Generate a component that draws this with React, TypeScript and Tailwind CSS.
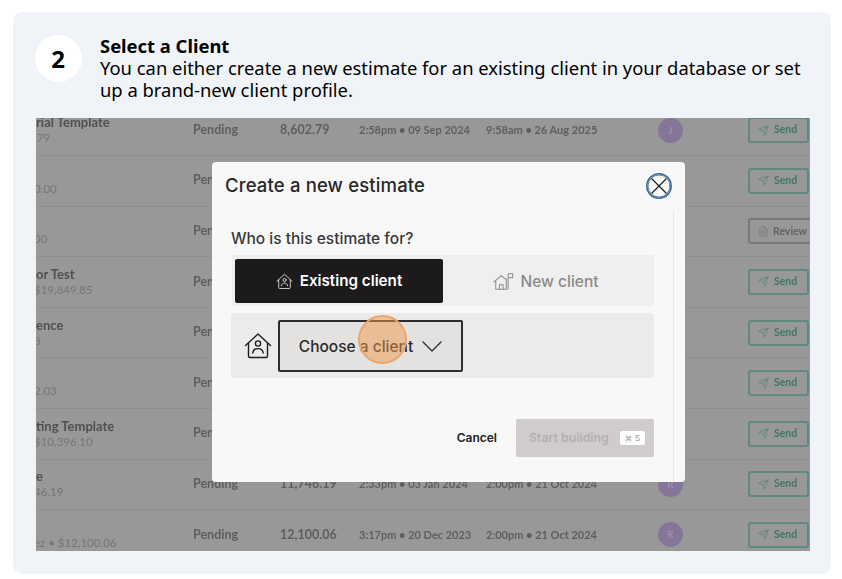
import React from 'react';
import { Send, FileText, Command } from 'lucide-react';

type Row = {
  name: string;
  sub: string;
  amount: string;
  created: string;
  updated: string;
  initial: string;
  review?: boolean;
};

const rows: Row[] = [
  { name: 'rial Template', sub: ',79', amount: '8,602.79', created: '2:58pm • 09 Sep 2024', updated: '9:58am • 26 Aug 2025', initial: 'J' },
  { name: '', sub: '0.00', amount: '0.00', created: '1:12pm • 02 Sep 2024', updated: '1:12pm • 02 Sep 2024', initial: 'J' },
  { name: '', sub: '00', amount: '0.00', created: '4:40pm • 21 Aug 2024', updated: '4:40pm • 21 Aug 2024', initial: 'R', review: true },
  { name: 'or Test', sub: '$19,849.85', amount: '19,849.85', created: '3:05pm • 14 Jun 2024', updated: '2:00pm • 21 Oct 2024', initial: 'R' },
  { name: 'ence', sub: '8', amount: '6,310.08', created: '11:20am • 29 May 2024', updated: '2:00pm • 21 Oct 2024', initial: 'R' },
  { name: '', sub: '2.03', amount: '9,402.03', created: '10:02am • 08 Apr 2024', updated: '2:00pm • 21 Oct 2024', initial: 'R' },
  { name: 'ting Template', sub: '$10,396.10', amount: '10,396.10', created: '9:44am • 19 Feb 2024', updated: '2:00pm • 21 Oct 2024', initial: 'R' },
  { name: 'e', sub: '46.19', amount: '11,746.19', created: '2:33pm • 03 Jan 2024', updated: '2:00pm • 21 Oct 2024', initial: 'R' },
  { name: '', sub: 'ez • $12,100.06', amount: '12,100.06', created: '3:17pm • 20 Dec 2023', updated: '2:00pm • 21 Oct 2024', initial: 'R' },
];

const HousePerson = ({ className }: { className?: string }) => (
  <svg className={className} viewBox="0 0 28 28" fill="none" stroke="currentColor" strokeWidth="1.4" strokeLinecap="round" strokeLinejoin="round">
    <path d="M1.500 13.500 14 2l12.500 11.500" />
    <path d="M4.500 11v13a1.500 1.500 0 0 0 1.500 1.500h16a1.500 1.500 0 0 0 1.500-1.500V11" />
    <circle cx="14" cy="11.500" r="2.600" />
    <path d="M8.800 21c.4-3 2.600-4.400 5.200-4.400s4.800 1.400 5.200 4.400" />
  </svg>
);

const HouseFlag = ({ className }: { className?: string }) => (
  <svg className={className} viewBox="0 0 24 20" fill="none" stroke="currentColor" strokeWidth="1.1" strokeLinecap="round" strokeLinejoin="round">
    <path d="M1 10.500 9 3.500l4.500 4" />
    <path d="M3 9v9.500h11.500V7" />
    <path d="M7 18.500v-5h4v5" />
    <path d="M16.500 18.500V1.500h5v4.500h-5" />
  </svg>
);

const CloseIcon = ({ className }: { className?: string }) => (
  <svg className={className} viewBox="0 0 26 26" fill="none" strokeLinecap="round">
    <circle cx="13" cy="13" r="12.200" stroke="#2b6ca6" strokeWidth="1.500" />
    <circle cx="13" cy="13" r="11" stroke="#2a2a2a" strokeWidth="0.600" />
    <path d="M6 6l14 14M20 6L6 20" stroke="#1a1a1a" strokeWidth="1.200" />
  </svg>
);

const TableRow = ({ row }: { row: Row }) => (
  <div className="flex h-[50.6px] w-max shrink-0 items-center border-b border-[#8f8f8f] text-[12.5px] font-bold text-[#5e5e5e]">
    <div className="flex w-[157px] shrink-0 flex-col justify-center leading-[15px]">
      <span className="h-[15px] text-[13px] text-[#505050]">{row.name}</span>
      <span className="-ml-[2px] h-[15px] text-[11.5px] font-medium text-[#787878]">{row.sub}</span>
    </div>
    <span className="w-[87px] shrink-0">Pending</span>
    <span className="w-[79px] shrink-0">{row.amount}</span>
    <span className="w-[127px] shrink-0 text-[11px]">{row.created}</span>
    <span className="w-[172px] shrink-0 text-[11px]">{row.updated}</span>
    <span className="flex h-[25px] w-[25px] shrink-0 items-center justify-center rounded-full bg-[#857599] text-[10px] text-[#9f8fae]">
      {row.initial}
    </span>
    {row.review ? (
      <span className="ml-[65px] flex h-[26px] w-[70px] shrink-0 items-center gap-[4px] rounded-[3px] border-2 border-[#797979] pl-[8px] text-[10.5px] font-bold text-[#636363]">
        <FileText className="h-[11px] w-[11px] shrink-0 text-[#7c7c7c]" />
        Review
      </span>
    ) : (
      <span className="ml-[65px] flex h-[26px] w-[61px] shrink-0 items-center gap-[5px] rounded-[3px] border-2 border-[#5f8a80] pl-[8px] text-[10.5px] font-bold text-[#3f7566]">
        <Send className="h-[11px] w-[11px] shrink-0 text-[#62877c]" />
        Send
      </span>
    )}
  </div>
);

const Modal = () => (
  <div className="absolute left-[176px] top-[44px] flex h-[320px] w-[473px] flex-col rounded-[4px] bg-[#f8f8f8] font-['Inter',sans-serif] text-[#1e1c1d]">
    <div className="flex h-[48px] items-center justify-between px-[13px]">
      <h2 className="text-[18.5px] font-medium tracking-[0.15px] text-[#2a2829]">Create a new estimate</h2>
      <CloseIcon className="h-[26px] w-[26px]" />
    </div>
    <div className="flex flex-1">
      <div className="flex w-[461px] flex-col px-[19px]">
        <p className="mt-[19px] text-[15.5px] font-medium leading-[19px] text-[#3a3839]">Who is this estimate for?</p>
        <div className="ml-[1px] mt-[7px] flex h-[51px] items-center bg-[#efefef] pl-[3px]">
          <div className="flex h-[44px] w-[208px] items-center justify-center gap-[7px] rounded-[2px] bg-[#1c1a1b] pt-[2px] text-[15.2px] font-semibold text-white">
            <HousePerson className="h-[17px] w-[17px] text-[#e8e8e8]" />
            Existing client
          </div>
          <div className="flex flex-1 items-center justify-center gap-[5px] pr-[5px] pt-[2px] text-[15.5px] font-medium text-[#8d898a]">
            <HouseFlag className="h-[19px] w-[22px] text-[#8d898a]" />
            New client
          </div>
        </div>
        <div className="mt-[7px] flex h-[65px] items-center rounded-[4px] bg-[#ecebea] pl-[13px]">
          <HousePerson className="h-[28px] w-[28px] text-[#1f1d1e]" />
          <div className="relative ml-[6px] flex h-[52px] w-[185px] items-center justify-center gap-[9px] rounded-[2px] border-2 border-[#2e2c2d] bg-[#e3e2e0] pt-[2px] text-[15.5px] font-medium text-[#2a2829]">
            Choose a client
            <svg className="h-[11px] w-[20px]" viewBox="0 0 20 11" fill="none" stroke="#2a2829" strokeWidth="1.300" strokeLinecap="round" strokeLinejoin="round">
              <path d="M1 1l9 9 9-9" />
            </svg>
            <span className="absolute left-[78px] top-[-7px] h-[49px] w-[49px] rounded-full border-2 border-[#eca469] bg-[#f09a4e]/50" />
          </div>
        </div>
        <div className="mt-[41px] flex items-center justify-end">
          <span className="mr-[19px] text-[12px] font-semibold text-[#232122]">Cancel</span>
          <div className="flex h-[38px] w-[138px] items-center justify-between rounded-[2px] bg-[#d0cbce] pl-[13px] pr-[9px] text-[12.300px] font-semibold text-[#b5afb3]">
            Start building
            <span className="flex h-[14px] w-[25px] items-center justify-center gap-[3px] rounded-[2px] bg-white text-[8px] font-normal text-[#9a9598]">
              <Command className="h-[7px] w-[7px]" />S
            </span>
          </div>
        </div>
      </div>
      <div className="w-px self-stretch bg-[#e6e6e6]" />
    </div>
  </div>
);

export default function App() {
  return (
    <div className="h-[579px] w-[842px] overflow-hidden bg-white pl-[13px] pt-[12px]">
      <div className="flex h-[562px] w-[818px] flex-col rounded-[9px] bg-[#f0f4f9] pl-[23px] pr-[21px] pt-[23px] font-['Noto_Sans',sans-serif] text-black">
        <div className="flex h-[67px] gap-[18px]">
          <div className="-ml-[1px] flex h-[47px] w-[47px] shrink-0 items-center justify-center rounded-full bg-white pr-[1px] text-[24px] font-bold">2</div>
          <div className="w-[715px] text-[18.4px] leading-[22px]">
            <h1 className="font-bold">Select a Client</h1>
            <p>You can either create a new estimate for an existing client in your database or set up a brand-new client profile.</p>
          </div>
        </div>
        <div className="relative mt-[16px] h-[433px] w-[774px] overflow-hidden bg-[#989898] font-['Lato',sans-serif]">
          <div className="-mt-[12.6px] flex flex-col blur-[0.6px]">
            {rows.map((row, i) => (
              <TableRow key={i} row={row} />
            ))}
          </div>
          <Modal />
        </div>
      </div>
    </div>
  );
}
